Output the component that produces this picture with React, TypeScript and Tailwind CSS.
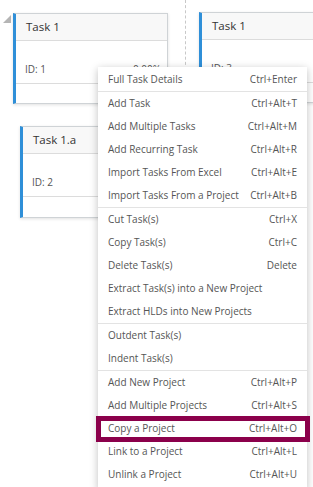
import React from 'react';

type Item = { label: string; keys?: string; sep?: boolean; hl?: boolean };

const items: Item[] = [
  { label: 'Full Task Details', keys: 'Ctrl+Enter', sep: true },
  { label: 'Add Task', keys: 'Ctrl+Alt+T' },
  { label: 'Add Multiple Tasks', keys: 'Ctrl+Alt+M' },
  { label: 'Add Recurring Task', keys: 'Ctrl+Alt+R' },
  { label: 'Import Tasks From Excel', keys: 'Ctrl+Alt+E' },
  { label: 'Import Tasks From a Project', keys: 'Ctrl+Alt+B', sep: true },
  { label: 'Cut Task(s)', keys: 'Ctrl+X' },
  { label: 'Copy Task(s)', keys: 'Ctrl+C' },
  { label: 'Delete Task(s)', keys: 'Delete' },
  { label: 'Extract Task(s) into a New Project' },
  { label: 'Extract HLDs into New Projects', sep: true },
  { label: 'Outdent Task(s)' },
  { label: 'Indent Task(s)', sep: true },
  { label: 'Add New Project', keys: 'Ctrl+Alt+P' },
  { label: 'Add Multiple Projects', keys: 'Ctrl+Alt+S' },
  { label: 'Copy a Project', keys: 'Ctrl+Alt+O', hl: true },
  { label: 'Link to a Project', keys: 'Ctrl+Alt+L' },
  { label: 'Unlink a Project', keys: 'Ctrl+Alt+U' },
];

function Card({ title, id, pct, className }: { title: string; id: string; pct?: string; className: string }) {
  return (
    <div className={`absolute bg-white border border-[#cfd3d6] border-l-[3px] border-l-[#2f8fd8] shadow-[0_1px_3px_rgba(0,0,0,0.12)] ${className}`}>
      <div className="h-[27px] flex items-center pl-[10px] text-[11.5px] text-[#333] bg-[#f8f8f8] border-b border-[#dcdcdc]">
        {title}
      </div>
      <div className="h-[43px] flex items-end justify-between pl-[9px] pr-[6px] pb-[6px] text-[10px] text-[#555] border-b border-[#dcdcdc]">
        <span>{id}</span>
        {pct && <span>{pct}</span>}
      </div>
    </div>
  );
}

export default function App() {
  return (
    <div
      className="relative w-[313px] h-[487px] bg-white overflow-hidden"
      style={{ fontFamily: '"Open Sans", "Noto Sans", sans-serif' }}
    >
      {/* collapse triangle */}
      <svg className="absolute left-[3px] top-[15px]" width="8" height="8" viewBox="0 0 8 8">
        <path d="M8 0 L8 8 L0 8 Z" fill="#b5b5b5" />
      </svg>

      {/* dashed divider */}
      <div className="absolute left-[185px] top-0 h-[70px] border-l border-dashed border-[#c8c8c8]" />

      <Card title="Task 1" id="ID: 1" pct="0.00%" className="left-[13px] top-[13px] w-[155px] h-[91px]" />
      <Card title="Task 1" id="ID: 3" className="left-[199px] top-[12px] w-[130px] h-[91px]" />
      <Card title="Task 1.a" id="ID: 2" className="left-[20px] top-[126px] w-[140px] h-[92px]" />

      {/* context menu */}
      <div className="absolute left-[98px] top-[67px] w-[209px] pt-[1px] pb-[4px] bg-white shadow-[0_2px_8px_rgba(0,0,0,0.25)] text-[10px] text-[#555]">
        {items.map((it) => (
          <div
            key={it.label}
            className={`relative flex items-center justify-between pl-[10px] pr-[10px] ${it.sep ? 'h-[24px] border-b border-[#e3e3e3]' : 'h-[23px]'}`}
          >
            <span>{it.label}</span>
            {it.keys && <span>{it.keys}</span>}
            {it.hl && (
              <span className="absolute left-[-2px] right-[-3px] top-[-1px] bottom-[-2px] border-[5px] border-[#8b004b]" />
            )}
          </div>
        ))}
      </div>
    </div>
  );
}
